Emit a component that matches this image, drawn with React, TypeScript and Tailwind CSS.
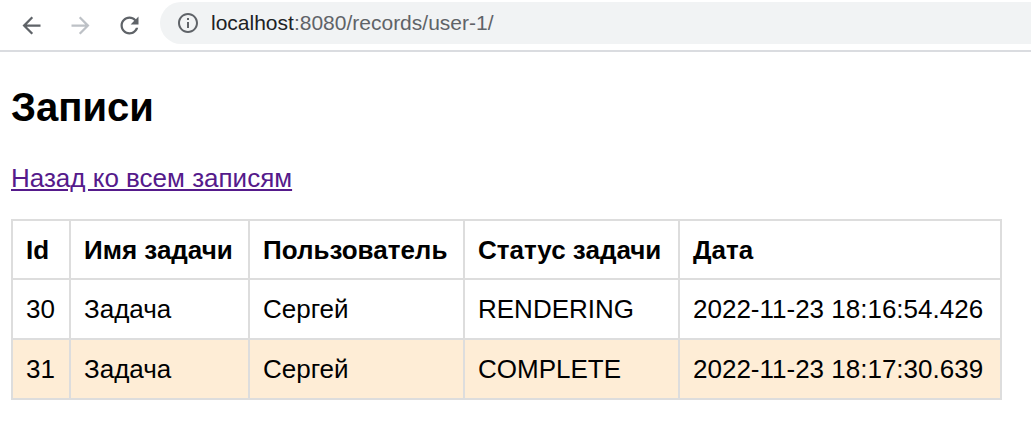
export default function App() {
  const rows = [
    { id: 30, name: 'Задача', user: 'Сергей', status: 'RENDERING', date: '2022-11-23 18:16:54.426' },
    { id: 31, name: 'Задача', user: 'Сергей', status: 'COMPLETE', date: '2022-11-23 18:17:30.639' },
  ];

  return (
    <div className="w-[1031px] h-[431px] bg-white overflow-hidden" style={{ fontFamily: '"Liberation Sans", Arial, sans-serif' }}>
      {/* Browser toolbar */}
      <div className="h-[52px] flex items-center border-b-2 border-[#dadce0]">
        <div className="flex items-center w-[160px] pl-[18px] gap-[22px]">
          <svg width="27" height="27" viewBox="0 0 24 24" fill="#5f6368">
            <path d="M20 11H7.83l5.59-5.59L12 4l-8 8 8 8 1.41-1.41L7.83 13H20v-2z" />
          </svg>
          <svg width="27" height="27" viewBox="0 0 24 24" fill="#bdc1c6">
            <path d="M12 4l-1.41 1.41L16.17 11H4v2h12.17l-5.58 5.59L12 20l8-8z" />
          </svg>
          <svg width="27" height="27" viewBox="0 0 24 24" fill="#5f6368">
            <path d="M17.65 6.35C16.2 4.9 14.21 4 12 4c-4.42 0-7.99 3.58-7.99 8s3.57 8 7.99 8c3.73 0 6.84-2.55 7.73-6h-2.08c-.82 2.33-3.04 4-5.65 4-3.31 0-6-2.69-6-6s2.69-6 6-6c1.66 0 3.14.69 4.22 1.78L13 11h7V4l-2.35 2.35z" />
          </svg>
        </div>
        <div className="flex-1 h-[42px] mt-[-4px] rounded-l-full bg-[#f1f3f4] flex items-center pl-[16px] gap-[11px]">
          <svg width="24" height="24" viewBox="0 0 24 24" fill="#5f6368">
            <path d="M11 7h2v2h-2zm0 4h2v6h-2zm1-9C6.48 2 2 6.48 2 12s4.48 10 10 10 10-4.48 10-10S17.52 2 12 2zm0 18c-4.41 0-8-3.59-8-8s3.59-8 8-8 8 3.59 8 8-3.59 8-8 8z" />
          </svg>
          <span className="text-[21px] text-[#202124]">
            localhost<span className="text-[#5f6368]">:8080/records/user-1/</span>
          </span>
        </div>
      </div>

      {/* Page content */}
      <div className="px-[11px]">
        <h1 className="text-[40px] font-bold leading-[46px] mt-[32px] text-black">Записи</h1>
        <a href="#" className="inline-block mt-[33px] text-[26px] leading-[30px] text-[#551a8b] underline">
          Назад ко всем записям
        </a>
        <table className="mt-[25px] border-collapse text-[26px] leading-[30px] text-black">
          <thead>
            <tr>
              <th className="w-[58px] border-2 border-[#dddddd] px-[13px] h-[59px] text-left font-bold">Id</th>
              <th className="w-[179px] border-2 border-[#dddddd] px-[13px] h-[59px] text-left font-bold">Имя задачи</th>
              <th className="w-[215px] border-2 border-[#dddddd] px-[13px] h-[59px] text-left font-bold">Пользователь</th>
              <th className="w-[215px] border-2 border-[#dddddd] px-[13px] h-[59px] text-left font-bold">Статус задачи</th>
              <th className="w-[322px] border-2 border-[#dddddd] px-[13px] h-[59px] text-left font-bold">Дата</th>
            </tr>
          </thead>
          <tbody>
            {rows.map((r, i) => (
              <tr key={r.id} className={i % 2 === 1 ? 'bg-[#feedd6]' : 'bg-white'}>
                <td className="border-2 border-[#dddddd] px-[13px] h-[60px]">{r.id}</td>
                <td className="border-2 border-[#dddddd] px-[13px] h-[60px]">{r.name}</td>
                <td className="border-2 border-[#dddddd] px-[13px] h-[60px]">{r.user}</td>
                <td className="border-2 border-[#dddddd] px-[13px] h-[60px]">{r.status}</td>
                <td className="border-2 border-[#dddddd] px-[13px] h-[60px]">{r.date}</td>
              </tr>
            ))}
          </tbody>
        </table>
      </div>
    </div>
  );
}
